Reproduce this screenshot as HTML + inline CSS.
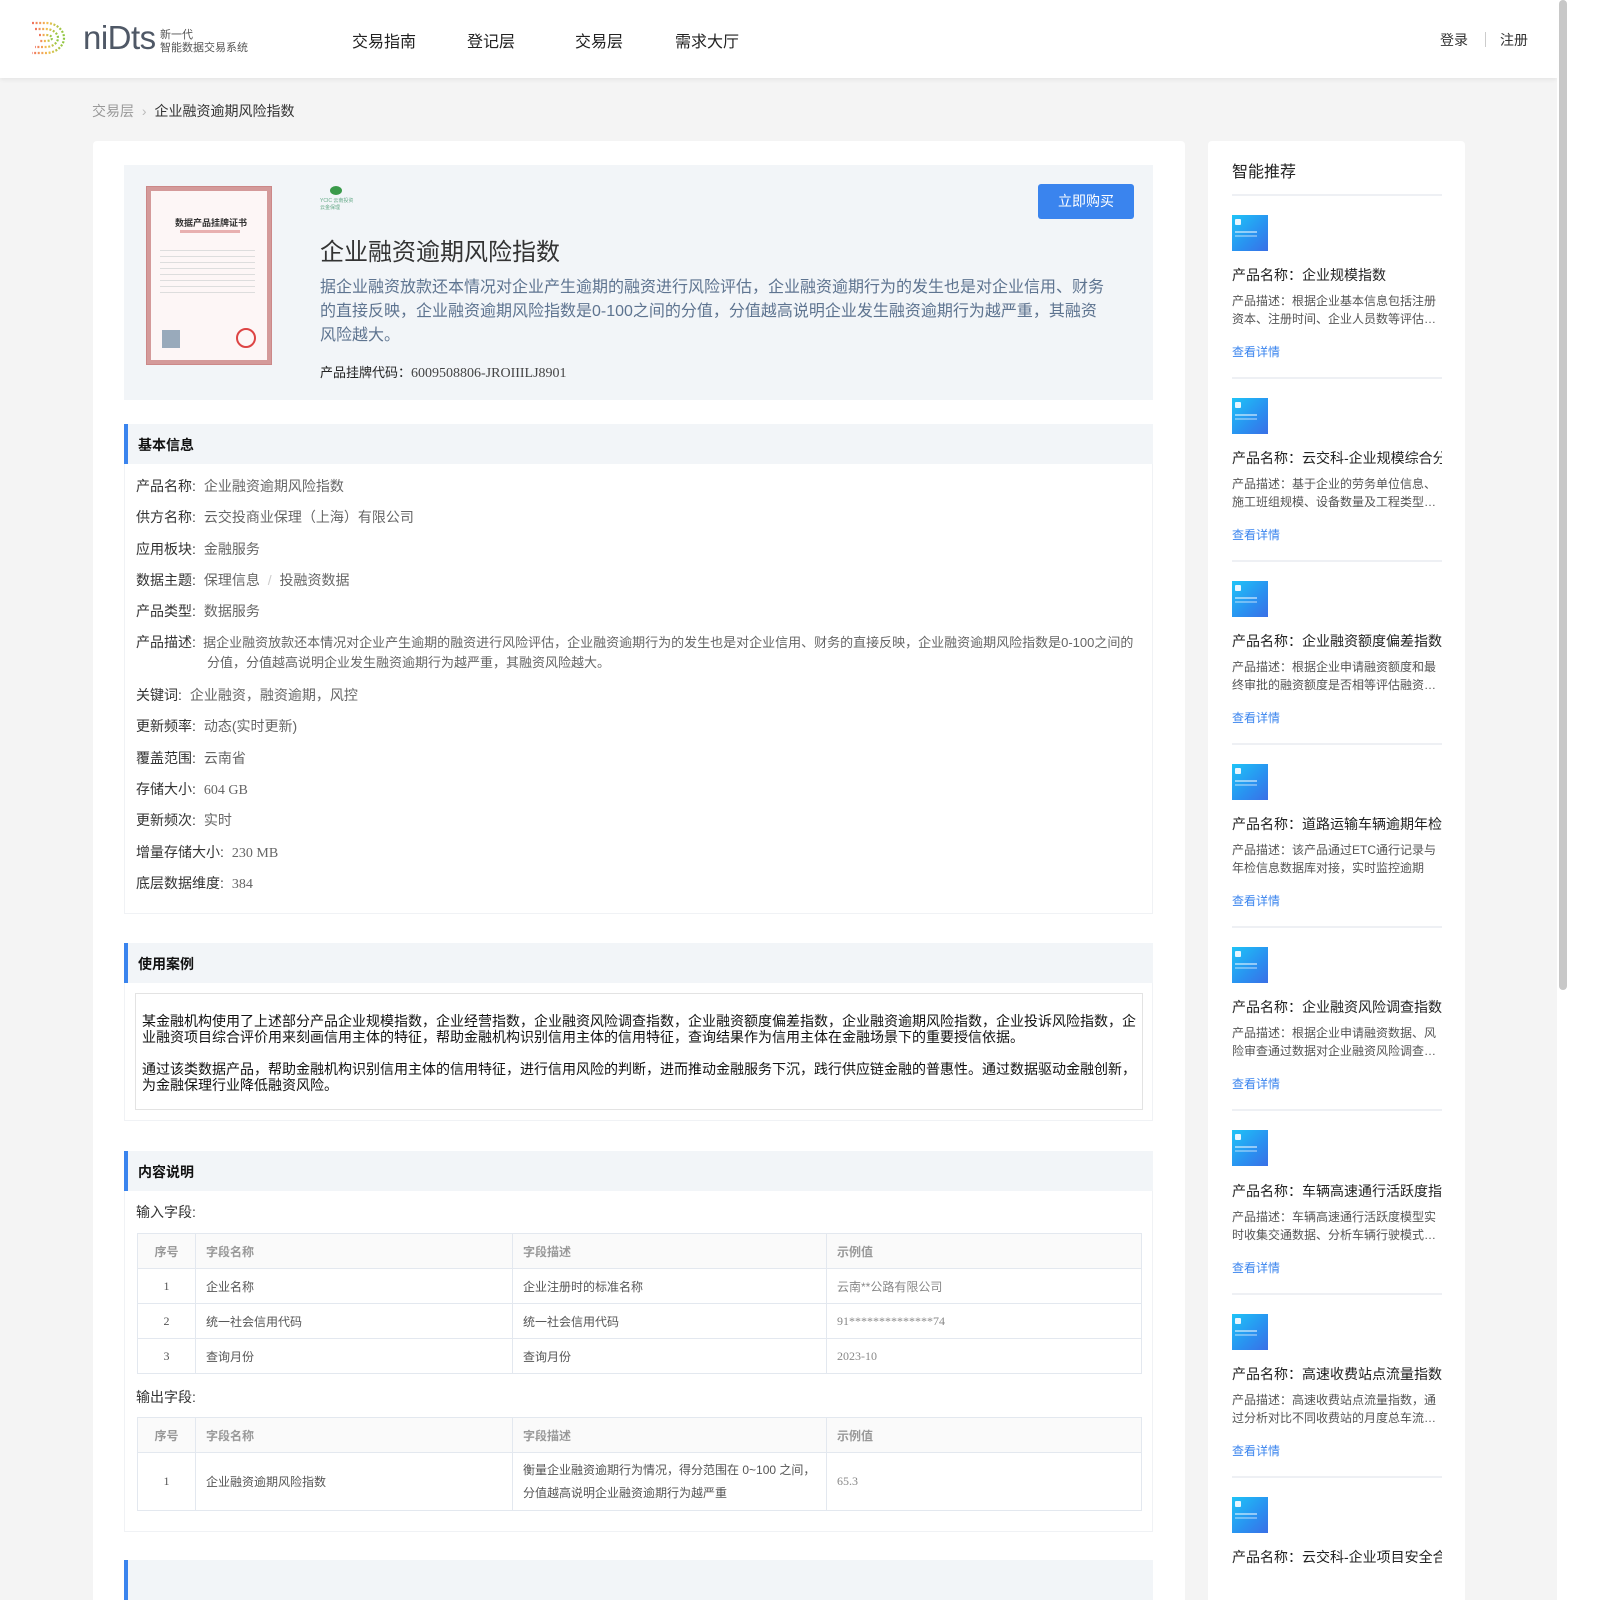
<!DOCTYPE html>
<html><head><meta charset="utf-8">
<style>
*{margin:0;padding:0;box-sizing:border-box}
body{width:1600px;height:1600px;overflow:hidden;background:#fff;font-family:"Liberation Sans","Noto Sans CJK SC",sans-serif;color:#333;position:relative}
.a{position:absolute;white-space:nowrap}
#bg{position:absolute;left:0;top:0;width:1557px;height:1600px;background:#f4f4f4}
#hdr{position:absolute;left:0;top:0;width:1557px;height:78px;background:#fff;box-shadow:0 2px 4px rgba(0,0,0,.06)}
.nav{font-size:16px;color:#222;top:28px}
.card{position:absolute;background:#fff;border-radius:4px}
.sec{position:absolute;left:124px;width:1029px;height:40px;background:#f2f5f8;border-left:4px solid #3a84ee;font-size:14px;font-weight:bold;color:#111;padding:11px 0 0 10px}
.row{position:absolute;left:136px;font-size:14px;color:#333;white-space:nowrap}
.row span{color:#666;margin-left:8px}
.sf{font-family:"Liberation Serif","Noto Sans CJK SC",serif}
table{position:absolute;left:137px;width:1005px;border-collapse:collapse;font-size:12px;color:#555}
td,th{border:1px solid #e3e8ef;padding:0 10px;text-align:left;font-weight:normal}
th{background:#fafafa;color:#999;font-weight:bold;height:35px}
td{height:35px}
td:first-child,th:first-child{text-align:center;width:58px}
.rtitle{font-size:14px;color:#222}
.rdesc{font-size:12px;color:#555;line-height:18px;white-space:normal;width:210px;height:36px;overflow:hidden}
.rlink{font-size:12px;color:#3a84ee}
.thumb{position:absolute;width:36px;height:36px;background:linear-gradient(135deg,#1ec4f7,#2a8ff0 60%,#3a6fe6)}
.thumb:before{content:"";position:absolute;left:3px;top:4px;width:6px;height:6px;background:#e8f6ff;border-radius:1px}
.thumb:after{content:"";position:absolute;left:3px;top:16px;width:22px;height:2px;background:rgba(255,255,255,.5);box-shadow:0 4px 0 rgba(255,255,255,.35)}
.hr{position:absolute;left:1232px;width:210px;height:2px;background:#eef0f4}
</style></head><body>
<div id="bg"></div>
<div id="hdr"></div>
<div class="a" style="left:1557px;top:0;width:11px;height:1600px;background:#fff"></div>
<div class="a" style="left:1559px;top:0;width:8px;height:990px;background:#c8c8c8;border-radius:4px"></div>
<svg class="a" style="left:28px;top:20px" width="40" height="36" viewBox="0 0 40 36">
<defs><linearGradient id="g" x1="0" x2="1"><stop offset="0" stop-color="#f07060"/><stop offset=".5" stop-color="#f3c050"/><stop offset="1" stop-color="#8cc640"/></linearGradient></defs>
<g fill="none" stroke="url(#g)" stroke-width="2.2" stroke-dasharray="2 1.6">
<path d="M4 3H18C28 3 36 10 36 18S28 33 18 33H4"/><path d="M7 9H18C24 9 30 13 30 18S24 27 18 27H7"/><path d="M11 15H18C21 15 24 16 24 18S21 21 18 21H11"/><path d="M8 10V26"/></g></svg>
<div class="a" style="left:83px;top:18px;font-size:33px;color:#4f5866;letter-spacing:-0.5px;line-height:40px">niDts</div>
<div class="a" style="left:160px;top:29px;font-size:11px;color:#555;line-height:13px">新一代<br>智能数据交易系统</div>
<div class="a nav" style="left:352px">交易指南</div>
<div class="a nav" style="left:467px">登记层</div>
<div class="a nav" style="left:575px">交易层</div>
<div class="a nav" style="left:675px">需求大厅</div>
<div class="a" style="left:1440px;top:30px;font-size:14px;color:#333">登录</div>
<div class="a" style="left:1485px;top:32px;width:1px;height:15px;background:#ccc"></div>
<div class="a" style="left:1500px;top:30px;font-size:14px;color:#333">注册</div>
<div class="a" style="left:92px;top:101px;font-size:14px;color:#999">交易层 <span style="color:#bbb;margin:0 4px">›</span> <span style="color:#333">企业融资逾期风险指数</span></div>

<div class="card" style="left:93px;top:141px;width:1092px;height:1470px"></div>
<div class="card" style="left:1208px;top:141px;width:257px;height:1470px"></div>

<div class="a" style="left:124px;top:165px;width:1029px;height:235px;background:#f2f5f8"></div>
<div class="a" style="left:147px;top:187px;width:124px;height:177px;background:#fdf6f6;border:4px solid #d49a9a;outline:1px solid #c88"></div>
<div class="a" style="left:175px;top:216px;font-size:9px;font-weight:bold;color:#333">数据产品挂牌证书</div>
<div class="a" style="left:180px;top:230px;width:60px;height:3px;background:#e8b0b0"></div>
<div class="a" style="left:160px;top:245px;width:95px;height:50px;background:repeating-linear-gradient(#fdf6f6 0 5px,#ddd 5px 6px)"></div>
<div class="a" style="left:162px;top:330px;width:18px;height:18px;background:#9ab"></div>
<div class="a" style="left:236px;top:328px;width:20px;height:20px;border:2px solid #d44;border-radius:50%"></div>
<div class="a" style="left:330px;top:186px;width:12px;height:9px;border-radius:50%;background:#3a9a4a"></div>
<div class="a" style="left:320px;top:197px;font-size:5px;color:#6a8">YCIC 云南投资<br>云金保理</div>
<div class="a" style="left:320px;top:232px;font-size:24px;color:#333">企业融资逾期风险指数</div>
<div class="a" style="left:320px;top:276px;width:790px;font-size:16px;line-height:24px;color:#5e7490;white-space:normal">据企业融资放款还本情况对企业产生逾期的融资进行风险评估，企业融资逾期行为的发生也是对企业信用、财务的直接反映，企业融资逾期风险指数是0-100之间的分值，分值越高说明企业发生融资逾期行为越严重，其融资风险越大。</div>
<div class="a" style="left:320px;top:362px;font-size:13px;color:#222">产品挂牌代码：<span class="sf" style="color:#444;font-size:14px">6009508806-JROIIILJ8901</span></div>
<div class="a" style="left:1038px;top:184px;width:96px;height:35px;background:#3a84ee;border-radius:3px;color:#fff;font-size:14px;text-align:center;line-height:35px">立即购买</div>

<div class="sec" style="top:424px">基本信息</div>
<div class="a" style="left:124px;top:464px;width:1029px;height:450px;border:1px solid #f0f2f5;border-top:0"></div>
<div class="row" style="top:476px">产品名称:<span>企业融资逾期风险指数</span></div>
<div class="row" style="top:507px">供方名称:<span>云交投商业保理（上海）有限公司</span></div>
<div class="row" style="top:539px">应用板块:<span>金融服务</span></div>
<div class="row" style="top:570px">数据主题:<span>保理信息 <i style="color:#ccc;font-style:normal;margin:0 4px">/</i> 投融资数据</span></div>
<div class="row" style="top:601px">产品类型:<span>数据服务</span></div>
<div class="row" style="top:632px;white-space:normal;width:1000px;padding-left:71px;text-indent:-71px;font-size:13px;line-height:20px"><span style="color:#333;margin:0;font-size:14px">产品描述:</span>&nbsp;&nbsp;<span style="margin:0">据企业融资放款还本情况对企业产生逾期的融资进行风险评估，企业融资逾期行为的发生也是对企业信用、财务的直接反映，企业融资逾期风险指数是0-100之间的分值，分值越高说明企业发生融资逾期行为越严重，其融资风险越大。</span></div>
<div class="row" style="top:685px">关键词:<span>企业融资，融资逾期，风控</span></div>
<div class="row" style="top:716px">更新频率:<span>动态(实时更新)</span></div>
<div class="row" style="top:748px">覆盖范围:<span>云南省</span></div>
<div class="row" style="top:779px">存储大小:<span class="sf">604 GB</span></div>
<div class="row" style="top:810px">更新频次:<span>实时</span></div>
<div class="row" style="top:842px">增量存储大小:<span class="sf">230 MB</span></div>
<div class="row" style="top:873px">底层数据维度:<span class="sf">384</span></div>

<div class="sec" style="top:943px">使用案例</div>
<div class="a" style="left:124px;top:983px;width:1029px;height:138px;border:1px solid #f0f2f5;border-top:0"></div>
<div class="a" style="left:135px;top:993px;width:1008px;height:117px;border:1px solid #e3e3e3;padding:19px 6px 0 6px;font-size:14px;line-height:16px;color:#111;white-space:normal">某金融机构使用了上述部分产品企业规模指数，企业经营指数，企业融资风险调查指数，企业融资额度偏差指数，企业融资逾期风险指数，企业投诉风险指数，企业融资项目综合评价用来刻画信用主体的特征，帮助金融机构识别信用主体的信用特征，查询结果作为信用主体在金融场景下的重要授信依据。<br><br style="line-height:13px">通过该类数据产品，帮助金融机构识别信用主体的信用特征，进行信用风险的判断，进而推动金融服务下沉，践行供应链金融的普惠性。通过数据驱动金融创新，为金融保理行业降低融资风险。</div>

<div class="sec" style="top:1151px">内容说明</div>
<div class="a" style="left:124px;top:1191px;width:1029px;height:341px;border:1px solid #f0f2f5;border-top:0"></div>
<div class="row" style="top:1202px">输入字段:</div>
<table style="top:1233px">
<tr><th>序号</th><th style="width:317px">字段名称</th><th style="width:314px">字段描述</th><th>示例值</th></tr>
<tr><td class="sf">1</td><td>企业名称</td><td>企业注册时的标准名称</td><td style="color:#888">云南**公路有限公司</td></tr>
<tr><td class="sf">2</td><td>统一社会信用代码</td><td>统一社会信用代码</td><td class="sf" style="color:#888">91**************74</td></tr>
<tr><td class="sf">3</td><td>查询月份</td><td>查询月份</td><td class="sf" style="color:#888">2023-10</td></tr>
</table>
<div class="row" style="top:1387px">输出字段:</div>
<table style="top:1417px">
<tr><th>序号</th><th style="width:317px">字段名称</th><th style="width:314px">字段描述</th><th>示例值</th></tr>
<tr><td class="sf" style="height:58px">1</td><td>企业融资逾期风险指数</td><td style="line-height:23px">衡量企业融资逾期行为情况，得分范围在 0~100 之间，<br>分值越高说明企业融资逾期行为越严重</td><td class="sf" style="color:#888">65.3</td></tr>
</table>
<div class="sec" style="top:1560px"></div>

<div class="a" style="left:1232px;top:158px;font-size:16px;color:#222">智能推荐</div>
<div class="hr" style="top:194px"></div>

<div class="thumb" style="left:1232px;top:215px"></div>
<div class="a rtitle" style="left:1232px;top:265px">产品名称：企业规模指数</div>
<div class="a rdesc" style="left:1232px;top:292px">产品描述：根据企业基本信息包括注册资本、注册时间、企业人员数等评估…</div>
<div class="a rlink" style="left:1232px;top:343px">查看详情</div>
<div class="hr" style="top:377px"></div>

<div class="thumb" style="left:1232px;top:398px"></div>
<div class="a rtitle" style="left:1232px;top:448px;width:210px;overflow:hidden">产品名称：云交科-企业规模综合分</div>
<div class="a rdesc" style="left:1232px;top:475px">产品描述：基于企业的劳务单位信息、施工班组规模、设备数量及工程类型…</div>
<div class="a rlink" style="left:1232px;top:526px">查看详情</div>
<div class="hr" style="top:560px"></div>

<div class="thumb" style="left:1232px;top:581px"></div>
<div class="a rtitle" style="left:1232px;top:631px">产品名称：企业融资额度偏差指数</div>
<div class="a rdesc" style="left:1232px;top:658px">产品描述：根据企业申请融资额度和最终审批的融资额度是否相等评估融资…</div>
<div class="a rlink" style="left:1232px;top:709px">查看详情</div>
<div class="hr" style="top:743px"></div>

<div class="thumb" style="left:1232px;top:764px"></div>
<div class="a rtitle" style="left:1232px;top:814px;width:210px;overflow:hidden">产品名称：道路运输车辆逾期年检预警</div>
<div class="a rdesc" style="left:1232px;top:841px">产品描述：该产品通过ETC通行记录与年检信息数据库对接，实时监控逾期未…</div>
<div class="a rlink" style="left:1232px;top:892px">查看详情</div>
<div class="hr" style="top:926px"></div>

<div class="thumb" style="left:1232px;top:947px"></div>
<div class="a rtitle" style="left:1232px;top:997px">产品名称：企业融资风险调查指数</div>
<div class="a rdesc" style="left:1232px;top:1024px">产品描述：根据企业申请融资数据、风险审查通过数据对企业融资风险调查…</div>
<div class="a rlink" style="left:1232px;top:1075px">查看详情</div>
<div class="hr" style="top:1109px"></div>

<div class="thumb" style="left:1232px;top:1130px"></div>
<div class="a rtitle" style="left:1232px;top:1181px;width:210px;overflow:hidden">产品名称：车辆高速通行活跃度指数</div>
<div class="a rdesc" style="left:1232px;top:1208px">产品描述：车辆高速通行活跃度模型实时收集交通数据、分析车辆行驶模式…</div>
<div class="a rlink" style="left:1232px;top:1259px">查看详情</div>
<div class="hr" style="top:1293px"></div>

<div class="thumb" style="left:1232px;top:1314px"></div>
<div class="a rtitle" style="left:1232px;top:1364px;width:210px;overflow:hidden">产品名称：高速收费站点流量指数模型</div>
<div class="a rdesc" style="left:1232px;top:1391px">产品描述：高速收费站点流量指数，通过分析对比不同收费站的月度总车流…</div>
<div class="a rlink" style="left:1232px;top:1442px">查看详情</div>
<div class="hr" style="top:1476px"></div>

<div class="thumb" style="left:1232px;top:1497px"></div>
<div class="a rtitle" style="left:1232px;top:1547px;width:210px;overflow:hidden">产品名称：云交科-企业项目安全合规</div>
</body></html>
